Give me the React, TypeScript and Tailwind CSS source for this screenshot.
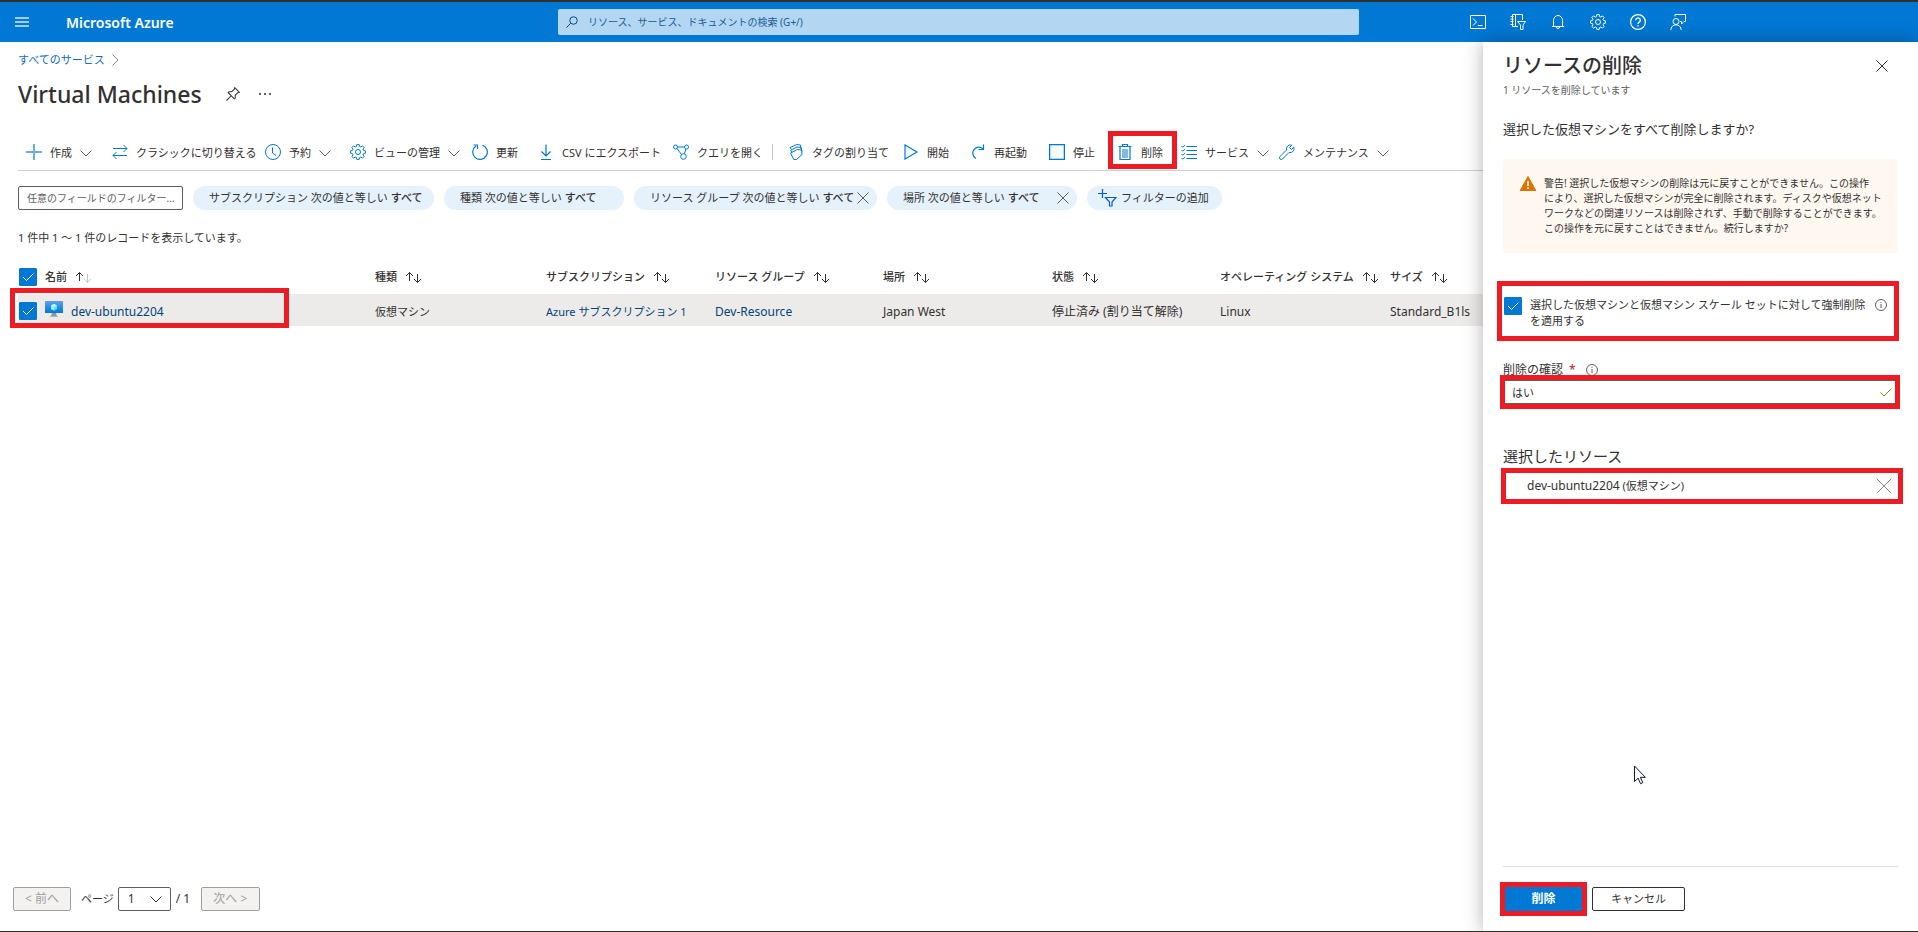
import { useState } from "react";
import type { ReactNode } from "react";
import clsx from "clsx";

interface IconProps {
  children: ReactNode;
  className?: string;
  size?: number;
}

function Icon({ children, className, size = 16 }: IconProps) {
  return (
    <svg
      viewBox="0 0 16 16"
      width={size}
      height={size}
      fill="none"
      stroke="currentColor"
      strokeWidth="1"
      className={clsx("shrink-0", className)}
      aria-hidden="true"
    >
      {children}
    </svg>
  );
}

const GEAR =
  "M6.8 .6h2.4l.4 1.9 1.2.5 1.7-1.1 1.6 1.6L13 5.2l.5 1.2 1.9.4v2.4l-1.9.4-.5 1.2 1.1 1.7-1.6 1.6-1.7-1.1-1.2.5-.4 1.9H6.8l-.4-1.9-1.2-.5-1.7 1.1-1.6-1.6L3 10.8l-.5-1.2-1.9-.4V6.8l1.9-.4L3 5.2 1.9 3.5l1.6-1.6L5.2 3l1.2-.5z";

function Chevron({ className }: { className?: string }) {
  return (
    <svg viewBox="0 0 12 12" width="12" height="12" fill="none" stroke="currentColor" className={clsx("shrink-0", className)} aria-hidden="true">
      <path d="M.5 3.500 6 9l5.500-5.500" />
    </svg>
  );
}

function Cross({ size = 12 }: { size?: number }) {
  return (
    <svg viewBox="0 0 12 12" width={size} height={size} fill="none" stroke="currentColor" className="shrink-0" aria-hidden="true">
      <path d="M.5.5l11 11M11.500.5l-11 11" vectorEffect="non-scaling-stroke" />
    </svg>
  );
}

function InfoIcon() {
  return (
    <svg viewBox="0 0 12 12" width="12" height="12" fill="none" stroke="#605e5c" className="shrink-0" aria-hidden="true">
      <circle cx="6" cy="6" r="5.500" />
      <path d="M6 5v4M6 3v1" />
    </svg>
  );
}

function SortIcon({ ascending }: { ascending?: boolean }) {
  return (
    <svg viewBox="0 0 17 13" width="17" height="13" fill="none" stroke="#323130" className="shrink-0" aria-hidden="true">
      <path d="M4.500 10V1.500M1 5l3.500-3.500L8 5" />
      <path d="M12.500 3v8.500M9 8l3.500 3.500L16 8" stroke={ascending ? "#c8c6c4" : "#323130"} />
    </svg>
  );
}

// Red frame drawn around a spot the reader should look at
function Highlight({ className }: { className: string }) {
  return <div className={clsx("pointer-events-none absolute z-10 border-[5px] border-[#ed1c24]", className)} />;
}

function Checkbox({ id, label }: { id: string; label?: string }) {
  const [checked, setChecked] = useState(true);
  return (
    <span className="relative block h-[18px] w-[18px] shrink-0">
      <input
        id={id}
        type="checkbox"
        aria-label={label}
        checked={checked}
        onChange={(e) => setChecked(e.target.checked)}
        className="block h-[18px] w-[18px] appearance-none rounded-[1px] border border-[#0078d4] bg-white checked:bg-[#0078d4]"
      />
      {checked && (
        <svg viewBox="0 0 18 18" className="pointer-events-none absolute inset-0 h-[18px] w-[18px]" fill="none" stroke="#fff" aria-hidden="true">
          <path d="M4 9l3.500 3.500L14.500 5.500" />
        </svg>
      )}
    </span>
  );
}

function TopBar() {
  const icons: { label: string; icon: ReactNode }[] = [
    {
      label: "Cloud Shell",
      icon: <path d="M.5 1.500h15v13H.5zM3 4.500 6.500 8 3 11.500M8 11.500h4.500" />,
    },
    {
      label: "ディレクトリとサブスクリプション",
      icon: <path d="M12.500 6V.5h-10v12H8M5.500.5v12M.5 2.500h3M.5 5h3M.5 7.500h3M.5 10.500h3M7.500 7.500h8l-2.500 3.500v4.500h-2.500V11z" />,
    },
    {
      label: "通知",
      icon: <path d="M3.500 12.500V6.500a4.500 5 0 0 1 9 0v6M2 12.500h12M6.500 13a1.500 1.500 0 0 0 3 0" />,
    },
    { label: "設定", icon: <><path d={GEAR} /><circle cx="8" cy="8" r="2.500" /></> },
    {
      label: "ヘルプ",
      icon: (
        <>
          <circle cx="8" cy="8" r="7.400" strokeWidth="1.200" />
          <path d="M5.700 6.200a2.300 2.300 0 1 1 3.500 2Q8 9 8 10M8 11.200v1.400" strokeWidth="1.400" />
        </>
      ),
    },
    {
      label: "フィードバック",
      icon: <><circle cx="6" cy="7.500" r="3" /><path d="M.8 16a5.200 5.200 0 0 1 10.400 0M5 2.500v-2h10.500v7H14l-2.500 2.500V7.500H10" /></>,
    },
  ];

  return (
    <header className="flex h-[42px] items-center border-t-2 border-[#323130] bg-[#0078d4] text-white">
      <div className="flex w-[558px] shrink-0 items-center">
        <button aria-label="メニュー" className="ml-[15px] text-[#9fcbee]">
          <svg width="14" height="11" viewBox="0 0 14 11" fill="currentColor" aria-hidden="true">
            <path d="M0 0h14v2H0zM0 4h14v2H0zM0 8h14v2H0z" />
          </svg>
        </button>
        <a href="#home" className="ml-[37px] text-[14px] font-semibold">Microsoft Azure</a>
      </div>
      <label className="flex h-[26px] min-w-0 flex-1 items-center rounded-xs bg-[#b3d7f2] pl-2 text-[#004578]">
        <Icon size={12}>
          <circle cx="10" cy="6" r="5" strokeWidth="1.300" />
          <path d="M6.300 9.700.5 15.500" strokeWidth="1.300" />
        </Icon>
        <input
          type="text"
          aria-label="検索"
          placeholder="リソース、サービス、ドキュメントの検索 (G+/)"
          className="ml-[10px] min-w-0 flex-1 bg-transparent text-[10px] outline-none placeholder:text-[#1b5a96]"
        />
      </label>
      <nav className="flex w-[559px] shrink-0 pl-[99px]">
        {icons.map((item) => (
          <button key={item.label} aria-label={item.label} className="flex w-10 justify-center">
            <Icon>{item.icon}</Icon>
          </button>
        ))}
      </nav>
    </header>
  );
}

interface Command {
  label: string;
  width: string;
  icon: ReactNode;
  menu?: boolean;
}

const commands: Command[] = [
  { label: "作成", width: "w-[86px]", menu: true, icon: <path d="M8 0v16M0 8h16" stroke="#69aeea" strokeWidth="2" /> },
  { label: "クラシックに切り替える", width: "w-[153px]", icon: <path d="M1 4.500h14M11.500 1 15 4.500 11.500 8M15 11.500H1M4.500 8 1 11.500 4.500 15" /> },
  { label: "予約", width: "w-[85px]", menu: true, icon: <><circle cx="8" cy="8" r="7.500" /><path d="M7.500 3.500V9l3.500 2.500" /></> },
  { label: "ビューの管理", width: "w-[122px]", menu: true, icon: <><path d={GEAR} /><circle cx="8" cy="8" r="2.500" /></> },
  { label: "更新", width: "w-[66px]", icon: <path d="M10.500 1.200A7.300 7.300 0 1 1 4 2M1.500 1h4v4" strokeWidth="1.200" /> },
  { label: "CSV にエクスポート", width: "w-[135px]", icon: <path d="M8 .5V12M3.500 7.500 8 12l4.500-4.500M3 15.500h10" strokeWidth="1.200" /> },
  {
    label: "クエリを開く",
    width: "w-[99px]",
    icon: <><circle cx="2.500" cy="3" r="2" /><circle cx="13.500" cy="3" r="2" /><circle cx="10.500" cy="12.500" r="2.800" /><path d="M4.500 3h7M4 4.500l4.500 6M12.800 5l-1.300 4.800" /></>,
  },
];

const vmCommands: Command[] = [
  {
    label: "タグの割り当て",
    width: "w-[115px]",
    icon: <path d="M3.500 5.500 2 3.700 8.500.5l4 .5.5 4M4.200 8.200 2.500 6.300 9 3l4.200.5.6 4M2.500 9 9.300 5.500l4.500.5.2 4.500-5.500 5H5.800z" />,
  },
  { label: "開始", width: "w-[67px]", icon: <path d="M2 1v14l12-7z" strokeWidth="1.200" /> },
  { label: "再起動", width: "w-[79px]", icon: <path d="M13.500.5v5h-5M13.500 5.500A6 6 0 1 0 6 14.500" strokeWidth="1.200" /> },
  { label: "停止", width: "w-[68px]", icon: <path d="M.6.6h14.800v14.800H.6z" strokeWidth="1.300" fill="#f3f9fd" /> },
  {
    label: "削除",
    width: "w-[64px]",
    icon: <><path d="M5 5h6v9H5z" fill="#83b9e6" stroke="none" /><path d="M1.500 2.500h13M5.500 2.500v-2h5v2M3 2.500v13h10v-13" strokeWidth="1.200" /></>,
  },
  {
    label: "サービス",
    width: "w-[98px]",
    menu: true,
    icon: <path d="M5.500 2.500H16M5.500 6.500H16M5.500 10.500H16M5.500 14.500H16M.5 2l1.200 1.200L4 1M.5 6l1.200 1.200L4 5M.5 10l1.200 1.200L4 9M.5 14l1.200 1.200L4 13" />,
  },
  {
    label: "メンテナンス",
    width: "w-[110px]",
    menu: true,
    icon: <path d="M14.800 3.200 12.500 5.500 10.500 3.500 12.800 1.200A4 4 0 0 0 7.500 6L1 12.500a1.600 1.600 0 0 0 2.500 2.500L10 8.500a4 4 0 0 0 4.800-5.300z" />,
  },
];

function CommandButton({ command }: { command: Command }) {
  return (
    <button className={clsx("relative flex h-9 shrink-0 items-center gap-2 whitespace-nowrap", command.width)}>
      <Icon className="text-[#0078d4]">{command.icon}</Icon>
      <span className="pt-0.5">{command.label}</span>
      {command.menu && <Chevron className="mt-0.5 text-[#605e5c]" />}
      {command.label === "削除" && <Highlight className="-left-[9px] -top-[3px] h-[38px] w-[69px]" />}
    </button>
  );
}

const filters = [
  { field: "サブスクリプション", width: "w-[241px]", removable: false },
  { field: "種類", width: "w-[180px]", removable: false },
  { field: "リソース グループ", width: "w-[243px]", removable: true },
  { field: "場所", width: "w-[190px]", removable: true },
];

const columns = [
  { label: "種類", width: "w-[171px]" },
  { label: "サブスクリプション", width: "w-[169px]" },
  { label: "リソース グループ", width: "w-[168px]" },
  { label: "場所", width: "w-[169px]" },
  { label: "状態", width: "w-[168px]" },
  { label: "オペレーティング システム", width: "w-[170px]" },
  { label: "サイズ", width: "" },
];

function VmIcon() {
  return (
    <svg viewBox="0 0 18 16" width="18" height="16" className="-mt-1 shrink-0" aria-hidden="true">
      <defs>
        <linearGradient id="screen" x1="0" y1="1" x2="0" y2="0">
          <stop offset="0" stopColor="#0078d4" />
          <stop offset="1" stopColor="#5ea0ef" />
        </linearGradient>
      </defs>
      <rect width="18" height="12" rx=".6" fill="url(#screen)" />
      <path d="M9 2.800l3 1.700v3.400L9 9.600 6 7.900V4.500z" fill="#50e6ff" />
      <path d="M9 2.800l3 1.700-3 1.700-3-1.700z" fill="#c3f1ff" />
      <path d="M6 4.500l3 1.700v3.400L6 7.900z" fill="#9cebff" />
      <path d="M7 12h4l.8 3H6.200z" fill="#949494" />
      <path d="M5 15h8v1H5z" fill="#b3b3b3" />
    </svg>
  );
}

function MachineTable() {
  return (
    <table className="mt-2 w-full table-fixed border-collapse text-left whitespace-nowrap">
      <thead>
        <tr className="h-9">
          <th className="w-[357px] p-0 pt-0.5 font-medium">
            <div className="flex items-center gap-2">
              <span className="ml-px">
                <Checkbox id="select-all" label="すべて選択" />
              </span>
              <span>名前</span>
              <SortIcon ascending />
            </div>
          </th>
          {columns.map((col) => (
            <th key={col.label} className={clsx("p-0 pt-0.5 font-medium", col.width)}>
              <div className="flex items-center gap-2">
                <span>{col.label}</span>
                <SortIcon />
              </div>
            </th>
          ))}
        </tr>
      </thead>
      <tbody>
        <tr className="h-8 bg-[#edebe9]">
          <td className="relative p-0 pt-0.5">
            <div className="flex items-center gap-2">
              <span className="ml-px">
                <Checkbox id="select-vm" label="dev-ubuntu2204 を選択" />
              </span>
              <VmIcon />
              <a href="#vm" className="pt-0.5 text-[12px] text-[#004578]">dev-ubuntu2204</a>
            </div>
            <Highlight className="-left-2 -top-[6px] h-10 w-[279px]" />
          </td>
          <td className="p-0 pt-1">仮想マシン</td>
          <td className="p-0 pt-1"><a href="#subscription" className="text-[#004578]">Azure サブスクリプション 1</a></td>
          <td className="p-0 pt-1 text-[12px]"><a href="#group" className="text-[#004578]">Dev-Resource</a></td>
          <td className="p-0 pt-1 text-[12px]">Japan West</td>
          <td className="p-0 pt-1 text-[12px]">停止済み (割り当て解除)</td>
          <td className="p-0 pt-1 text-[12px]">Linux</td>
          <td className="p-0 pt-1 text-[12px]">Standard_B1ls</td>
        </tr>
      </tbody>
    </table>
  );
}

function Pagination() {
  return (
    <div className="mt-auto flex items-center pb-5 pl-[13px] text-[12px]">
      <button disabled className="h-6 w-[58px] rounded-xs border border-[#a19f9d] bg-[#f3f2f1] text-[#a19f9d]">&lt; 前へ</button>
      <label htmlFor="page" className="mr-1 ml-[10px] text-[11px]">ページ</label>
      <div className="relative">
        <select id="page" className="block h-6 w-[53px] appearance-none rounded-xs border border-[#605e5c] bg-white pl-[9px]">
          <option>1</option>
        </select>
        <Chevron className="pointer-events-none absolute top-[6px] right-[9px]" />
      </div>
      <span className="mx-[5px] w-5">/ 1</span>
      <button disabled className="h-6 w-[59px] rounded-xs border border-[#a19f9d] bg-[#f3f2f1] text-[#a19f9d]">次へ &gt;</button>
    </div>
  );
}

function DeletePanel() {
  const [confirm, setConfirm] = useState("はい");

  return (
    <aside className="relative flex w-[435px] shrink-0 flex-col bg-white px-5 shadow-[0_0_18px_rgba(0,0,0,0.3)]">
      <div className="mt-2 flex h-8 items-center justify-between">
        <h2 className="text-[20px] font-medium">リソースの削除</h2>
        <button aria-label="閉じる" className="mr-[10px]"><Cross /></button>
      </div>
      <p className="text-[10px] leading-4 text-[#605e5c]">1 リソースを削除しています</p>
      <p className="mt-5 text-[13px] leading-[22px]">選択した仮想マシンをすべて削除しますか?</p>

      <div className="mt-[19px] flex gap-2 rounded-xs bg-[#fff8f0] py-[17px] pl-[17px]">
        <svg viewBox="0 0 16 16" width="16" height="16" className="shrink-0" aria-hidden="true">
          <path d="M8 .5 15.800 14.500H.2z" fill="#db7500" stroke="#db7500" strokeLinejoin="round" />
          <path d="M7.200 5h1.600v5H7.200zM7.200 11.300h1.600v1.600H7.200z" fill="#fff" />
        </svg>
        <p className="text-[10px] leading-[15px] whitespace-nowrap">
          警告! 選択した仮想マシンの削除は元に戻すことができません。この操作<br />
          により、選択した仮想マシンが完全に削除されます。ディスクや仮想ネット<br />
          ワークなどの関連リソースは削除されず、手動で削除することができます。<br />
          この操作を元に戻すことはできません。続行しますか?
        </p>
      </div>

      <div className="relative mt-7 flex gap-2 pt-4 pb-3 pl-px">
        <Checkbox id="force-delete" />
        <label htmlFor="force-delete" className="leading-4 whitespace-nowrap">
          選択した仮想マシンと仮想マシン スケール セットに対して強制削除<br />を適用する
        </label>
        <span className="mt-0.5 ml-auto pr-[11px]"><InfoIcon /></span>
        <Highlight className="inset-y-0 -left-[6px] -right-px" />
      </div>

      <div className="relative mt-[18px]">
        <div className="flex h-[21px] items-center gap-[6px]">
          <label htmlFor="confirm" className="text-[12px] leading-5">削除の確認</label>
          <span className="text-[12px] text-[#a4262c]">*</span>
          <span className="ml-1"><InfoIcon /></span>
        </div>
        <div className="relative">
          <input
            id="confirm"
            type="text"
            value={confirm}
            onChange={(e) => setConfirm(e.target.value)}
            className="block h-6 w-full border border-[#605e5c] pl-2 outline-none"
          />
          <svg viewBox="0 0 12 12" width="12" height="12" fill="none" stroke="#57a300" className="pointer-events-none absolute top-[6px] right-[6px]" aria-hidden="true">
            <path d="M.5 6.500 4 10l7.500-7.500" />
          </svg>
          <Highlight className="-inset-y-[5px] -left-[3px] -right-[2px]" />
        </div>
      </div>

      <h3 className="mt-10 text-[15px] leading-6">選択したリソース</h3>
      <div className="relative flex h-9 items-center justify-between pr-[6px] pl-6">
        <span><span className="text-[12px]">dev-ubuntu2204</span> (仮想マシン)</span>
        <button aria-label="削除対象から外す" className="text-[#8a8886]"><Cross size={16} /></button>
        <Highlight className="inset-y-0 -left-[2px] -right-[5px]" />
      </div>

      <svg viewBox="0 0 13 20" width="13" height="20" fill="#fff" stroke="#111827" className="absolute top-[723px] left-[151px]" aria-hidden="true">
        <path d="M.5 1v15.500l3.600-3.400 2.400 5.600 2.300-1-2.400-5.400h5z" />
      </svg>

      <div className="mt-auto flex items-center border-t border-[#e1dfdd] pt-5 pb-5 pl-[2px] text-[12px]">
        <div className="relative">
          <button className="block h-6 w-[77px] bg-[#0078d4] font-semibold text-white">削除</button>
          <Highlight className="-inset-[5px]" />
        </div>
        <button className="ml-[10px] h-6 w-[93px] rounded-xs border border-[#323130] text-[11px]">キャンセル</button>
      </div>
    </aside>
  );
}

export default function App() {
  return (
    <div className="flex min-h-screen flex-col overflow-hidden border-b border-[#323130] bg-white font-['Noto_Sans','Noto_Sans_CJK_JP',sans-serif] text-[11px] text-[#323130]">
      <TopBar />
      <div className="flex flex-1">
        <main className="flex min-w-0 flex-1 flex-col">
          <div className="flex flex-col pl-[18px]">
            <nav className="flex h-9 items-center gap-1">
              <a href="#services" className="text-[#0f6cbd]">すべてのサービス</a>
              <Chevron className="-rotate-90 text-[#8a8886]" />
            </nav>
            <div className="flex h-8 items-center">
              <h1 className="text-[23px] leading-7 font-medium">Virtual Machines</h1>
              <button aria-label="ピン留め" className="ml-6">
                <Icon size={14}>
                  <path d="M10 .8 15.200 6 13.500 6.500 10.500 9.500v3.200L9.500 13.500 2.500 6.500l.8-1h3.200L9.500 2.500zM6 10 .5 15.500" strokeWidth="1.200" />
                </Icon>
              </button>
              <button aria-label="その他" className="ml-[19px]">
                <svg viewBox="0 0 12 2" width="12" height="2" fill="#605e5c" aria-hidden="true">
                  <path d="M0 0h2v2H0zM5 0h2v2H5zM10 0h2v2h-2z" />
                </svg>
              </button>
            </div>

            <div className="mt-6 flex border-b border-[#d2d0ce] pl-2">
              {commands.map((command) => (
                <CommandButton key={command.label} command={command} />
              ))}
              <div className="mr-[15px] h-4 w-px shrink-0 self-center bg-[#c8c6c4]" />
              {vmCommands.map((command) => (
                <CommandButton key={command.label} command={command} />
              ))}
            </div>

            <div className="mt-[15px] flex gap-[10px] whitespace-nowrap">
              <input
                type="text"
                aria-label="フィルター"
                placeholder="任意のフィールドのフィルター..."
                className="h-6 w-[165px] shrink-0 rounded-xs border border-[#605e5c] px-2 text-[10px] outline-none placeholder:text-[#605e5c]"
              />
              {filters.map((filter) => (
                <div key={filter.field} className={clsx("flex h-6 shrink-0 items-center rounded-full bg-[#e5f1fb] pl-4", filter.width)}>
                  <button>
                    {filter.field} 次の値と等しい <b className="font-medium">すべて</b>
                  </button>
                  {filter.removable && (
                    <button aria-label="フィルターの削除" className="mr-2 ml-auto text-[#605e5c]"><Cross /></button>
                  )}
                </div>
              ))}
              <button className="flex h-6 w-[135px] shrink-0 items-center gap-1 rounded-full bg-[#e5f1fb] pl-[11px]">
                <svg viewBox="0 0 19 18" width="19" height="18" fill="none" stroke="#015cda" strokeWidth="1.200" className="shrink-0" aria-hidden="true">
                  <path d="M4.500 0v9M0 4.500h9M7.500 8.500h10.500l-4 4.500v4h-2.500v-4z" />
                </svg>
                フィルターの追加
              </button>
            </div>

            <p className="mt-4 leading-6">1 件中 1 ～ 1 件のレコードを表示しています。</p>
            <MachineTable />
          </div>
          <Pagination />
        </main>
        <DeletePanel />
      </div>
    </div>
  );
}
